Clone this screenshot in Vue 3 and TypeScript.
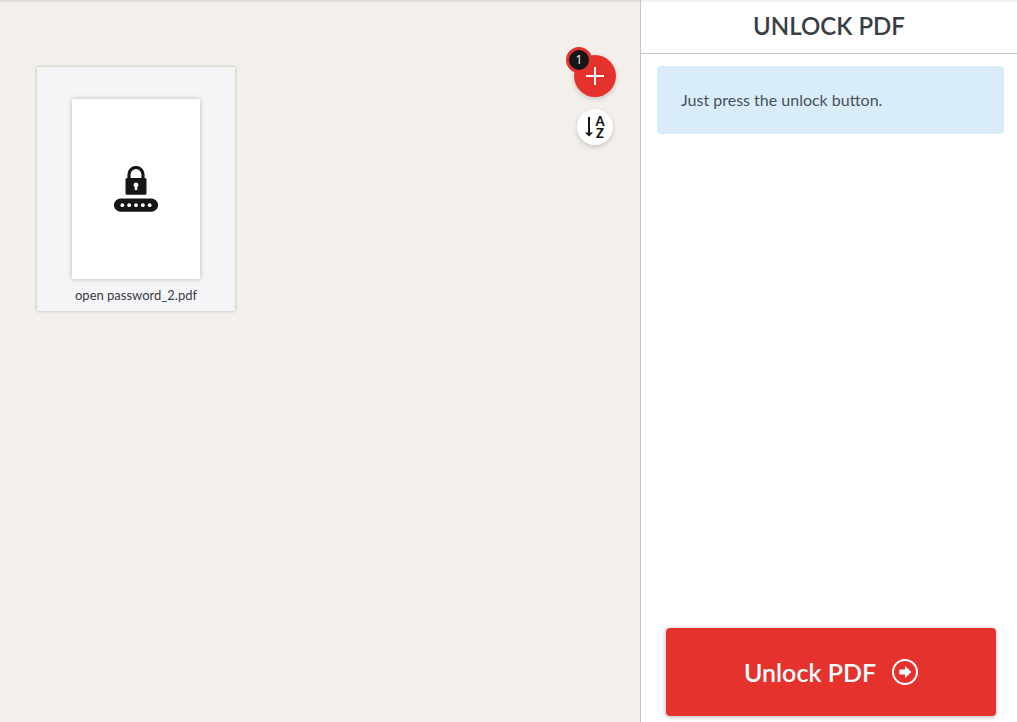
<script setup lang="ts">
import { ref } from 'vue'

interface PdfFile {
  id: number
  name: string
}

const files = ref<PdfFile[]>([{ id: 1, name: 'open password_2.pdf' }])

function sortFiles(): void {
  files.value.sort((a, b) => a.name.localeCompare(b.name))
}
</script>

<template>
  <div class="tool">
    <main class="workarea">
      <ul class="files">
        <li v-for="file in files" :key="file.id" class="file">
          <div class="page">
            <svg class="lock" viewBox="0 0 44 46" aria-hidden="true">
              <path d="M15 13V8.500a7 7 0 0 1 14 0V13" fill="none" stroke="#161616" stroke-width="3.200" />
              <path
                fill="#161616"
                fill-rule="evenodd"
                d="M13 12h18q1.500 0 1.500 1.500v13.700q0 1.500-1.500 1.500H13q-1.500 0-1.500-1.500V13.500Q11.500 12 13 12Zm9 4.500a2.500 2.500 0 0 0-1.300 4.600v3h2.600v-3a2.500 2.500 0 0 0-1.300-4.600Z"
              />
              <rect y="32.500" width="44" height="13.300" rx="6.650" fill="#161616" />
              <g fill="#fff">
                <circle v-for="n in 5" :key="n" :cx="n * 6.8 + 1.6" cy="39.200" r="1.900" />
              </g>
            </svg>
          </div>
          <span class="filename">{{ file.name }}</span>
        </li>
      </ul>
      <div class="actions">
        <button class="add" type="button" aria-label="Add more files">
          <svg viewBox="0 0 18 18" aria-hidden="true">
            <path d="M9 0v18M0 9h18" fill="none" stroke="#fff" stroke-width="2" />
          </svg>
          <span class="count">{{ files.length }}</span>
        </button>
        <button class="sort" type="button" aria-label="Sort files by name" @click="sortFiles">
          <svg viewBox="0 0 8 20" aria-hidden="true">
            <path d="M3 0h2v15.500h3L4 19.500 0 15.500h3Z" fill="#161616" />
          </svg>
          <span class="letters" aria-hidden="true">
            <span>A</span>
            <span>Z</span>
          </span>
        </button>
      </div>
    </main>
    <aside class="sidebar">
      <h1 class="title">UNLOCK PDF</h1>
      <p class="info">Just press the unlock button.</p>
      <button class="process" type="button">
        <span>Unlock PDF</span>
        <svg viewBox="0 0 26 26" aria-hidden="true">
          <circle cx="13" cy="13" r="12" fill="none" stroke="#fff" stroke-width="2" />
          <path d="M8 10.500h5V7l6.500 6-6.500 6v-3.500H8q-.7 0-.7-.7v-3.600q0-.7.7-.7Z" fill="#fff" />
        </svg>
      </button>
    </aside>
  </div>
</template>

<style>
body {
  margin: 0;
}
</style>

<style scoped>
.tool {
  display: flex;
  min-height: 100vh;
  font-family: Lato, "Open Sans", sans-serif;
  color: #383e45;
  background: #fff;
}

button {
  padding: 0;
  border: 0;
  font-family: inherit;
  cursor: pointer;
}

.workarea {
  flex: 1;
  display: flex;
  justify-content: space-between;
  align-items: flex-start;
  padding: 55px 24px 24px 37px;
  background: #f3f0eb;
  box-shadow: inset 0 3px 3px -2px rgba(0, 0, 0, 0.14);
}

.files {
  display: flex;
  flex-wrap: wrap;
  gap: 16px;
  margin: 12px 0 0;
  padding: 0;
  list-style: none;
}

.file {
  box-sizing: border-box;
  display: flex;
  flex-direction: column;
  align-items: center;
  width: 198px;
  padding: 32px 8px 7px;
  background: #f5f5f8;
  box-shadow: 0 0 3px rgba(0, 0, 0, 0.25);
}

.page {
  display: flex;
  align-items: center;
  justify-content: center;
  width: 128px;
  height: 180px;
  background: #fff;
  box-shadow: 0 0 5px rgba(0, 0, 0, 0.25);
}

.lock {
  width: 44px;
  height: 46px;
}

.filename {
  margin-top: 8px;
  font-size: 13px;
  line-height: 17px;
}

.actions {
  display: flex;
  flex-direction: column;
  align-items: center;
  gap: 12px;
}

.add,
.sort {
  display: flex;
  align-items: center;
  justify-content: center;
  border-radius: 50%;
  box-shadow: 0 2px 5px rgba(0, 0, 0, 0.18);
}

.add {
  position: relative;
  width: 42px;
  height: 42px;
  background: #e5322d;
}

.add svg {
  width: 18px;
  height: 18px;
}

.count {
  position: absolute;
  top: -8px;
  left: -8px;
  width: 20px;
  border: 3px solid #e5322d;
  border-radius: 50%;
  color: #fff;
  background: #161616;
  font-family: "Open Sans", sans-serif;
  font-size: 12px;
  line-height: 20px;
  text-align: center;
}

.sort {
  gap: 2px;
  width: 36px;
  height: 36px;
  color: #161616;
  background: #fff;
}

.sort svg {
  width: 8px;
  height: 20px;
}

.letters {
  display: flex;
  flex-direction: column;
  align-items: center;
  font-size: 13px;
  font-weight: 900;
  line-height: 12px;
}

.sidebar {
  box-sizing: border-box;
  flex: 0 0 377px;
  display: flex;
  flex-direction: column;
  border-left: 1px solid #c7c7c7;
  box-shadow: inset 0 3px 3px -2px rgba(0, 0, 0, 0.1);
}

.title {
  margin: 0;
  padding: 10px 8px 11px;
  border-bottom: 1px solid #c7c7c7;
  font-size: 24px;
  font-weight: 600;
  line-height: 32px;
  text-align: center;
}

.info {
  margin: 12px 13px 24px 16px;
  padding: 22px 24px;
  border-radius: 4px;
  color: #47505a;
  background: #d9edf8;
  font-size: 16px;
  line-height: 24px;
}

.process {
  display: flex;
  align-items: center;
  justify-content: center;
  gap: 16px;
  height: 88px;
  margin: auto 21px 6px 25px;
  border-radius: 4px;
  color: #fff;
  background: #e5322d;
  box-shadow: 0 1px 5px rgba(0, 0, 0, 0.3);
  font-size: 25px;
  font-weight: 600;
  line-height: 32px;
}

.process svg {
  width: 26px;
  height: 26px;
}
</style>
